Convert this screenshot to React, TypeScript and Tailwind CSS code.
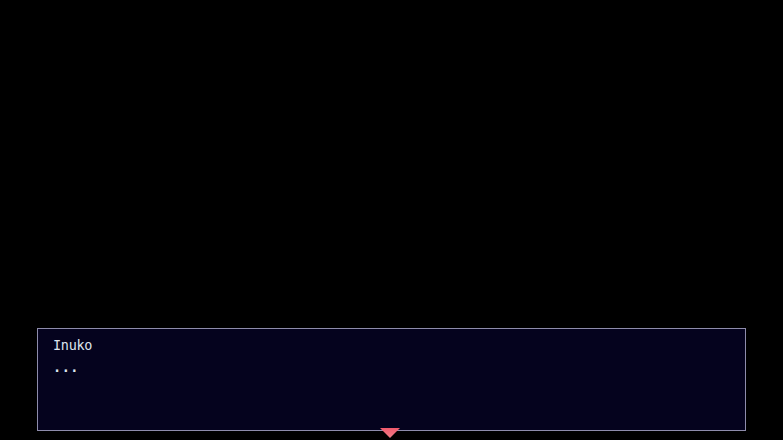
import React from "react";

export default function App() {
  return (
    <div className="w-[783px] h-[440px] bg-black flex flex-col overflow-hidden">
      <div className="flex-1" />
      <div className="relative ml-[37px] mb-[9px] w-[709px] h-[103px] bg-[#05031e] border border-[#8e8cab] px-[15px] pt-[5px]">
        <div
          className="text-[13.5px] leading-[22px] text-[#dde5ee]"
          style={{ fontFamily: '"DejaVu Sans Mono", monospace', letterSpacing: "-0.3px" }}
        >
          <div>Inuko</div>
          <div className="font-bold tracking-[0.5px]">...</div>
        </div>
        <svg
          className="absolute left-[341px] top-[98px]"
          width="22"
          height="12"
          viewBox="0 0 22 12"
        >
          <defs>
            <linearGradient id="g" x1="0" y1="0" x2="0" y2="1">
              <stop offset="0" stopColor="#f25a6c" />
              <stop offset="1" stopColor="#ee7f87" />
            </linearGradient>
          </defs>
          <polygon points="1,1 21,1 11,11" fill="url(#g)" />
        </svg>
      </div>
    </div>
  );
}
